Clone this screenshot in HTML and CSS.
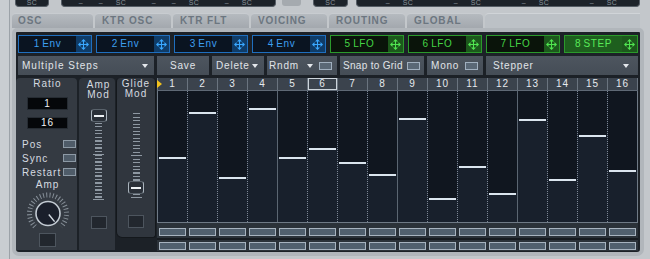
FILE: index.html
```html
<!DOCTYPE html>
<html>
<head>
<link rel="stylesheet" href="styles.css">
</head>
<body>
<svg class="defs" width="0" height="0">
  <symbol id="move" viewBox="0 0 11 11">
    <path d="M5.5 2v7M2 5.5h7" stroke="currentColor" stroke-width="1"/>
    <path d="M5.5 0L3 2.5h5zM5.5 11L3 8.5h5zM0 5.5L2.5 3v5zM11 5.5L8.5 3v5z" fill="currentColor"/>
  </symbol>
</svg>

<div class="topbar">
  <div class="sc sc-a"><span>SC</span></div>
  <div class="sc sc-b">
    <div class="grp"><span>–</span><span>–</span><span>SC</span></div>
    <div class="grp"><span>–</span><span>–</span><span>SC</span></div>
    <div class="grp"><span>–</span><span>SC</span></div>
  </div>
  <div class="greybox"></div>
  <div class="sc sc-c"><span>SC</span></div>
  <div class="sc sc-d">
    <div class="grp"><span>–</span><span>SC</span></div>
    <div class="grp"><span>–</span><span>SC</span></div>
    <div class="grp"><span>–</span><span>SC</span></div>
    <div class="grp"><span>–</span><span>SC</span></div>
  </div>
</div>

<div class="tabs">
  <div class="tab wide">OSC</div>
  <div class="tab">KTR OSC</div>
  <div class="tab">KTR FLT</div>
  <div class="tab">VOICING</div>
  <div class="tab">ROUTING</div>
  <div class="tab">GLOBAL</div>
  <div class="tab-fill"></div>
</div>

<div class="main">
  <div class="mods">
    <div class="mod blue"><span class="lbl">1 Env</span><span class="drag"><svg width="11" height="11"><use href="#move"/></svg></span></div>
    <div class="mod blue"><span class="lbl">2 Env</span><span class="drag"><svg width="11" height="11"><use href="#move"/></svg></span></div>
    <div class="mod blue"><span class="lbl">3 Env</span><span class="drag"><svg width="11" height="11"><use href="#move"/></svg></span></div>
    <div class="mod blue"><span class="lbl">4 Env</span><span class="drag"><svg width="11" height="11"><use href="#move"/></svg></span></div>
    <div class="mod green"><span class="lbl">5 LFO</span><span class="drag"><svg width="11" height="11"><use href="#move"/></svg></span></div>
    <div class="mod green"><span class="lbl">6 LFO</span><span class="drag"><svg width="11" height="11"><use href="#move"/></svg></span></div>
    <div class="mod green"><span class="lbl">7 LFO</span><span class="drag"><svg width="11" height="11"><use href="#move"/></svg></span></div>
    <div class="mod green on"><span class="lbl">8 STEP</span><span class="drag"><svg width="11" height="11"><use href="#move"/></svg></span></div>
  </div>

  <div class="tools">
    <div class="btn b-steps">Multiple Steps<i class="arrow"></i></div>
    <div class="btn b-save">Save</div>
    <div class="btn b-delete">Delete<i class="arrow"></i></div>
    <div class="btn b-rndm">Rndm<i class="arrow"></i><i class="chk"></i></div>
    <div class="btn b-snap">Snap to Grid<i class="chk"></i></div>
    <div class="btn b-mono">Mono<i class="chk"></i></div>
    <div class="btn b-stepper">Stepper<i class="arrow"></i></div>
  </div>

  <div class="lower">
    <div class="side">
      <div class="ratio">
        <div class="ptitle">Ratio</div>
        <div class="field f1">1</div>
        <div class="field f2">16</div>
        <div class="opt"><span>Pos</span><i class="chk"></i></div>
        <div class="opt"><span>Sync</span><i class="chk"></i></div>
        <div class="opt"><span>Restart</span><i class="chk"></i></div>
        <div class="ptitle amp-lbl">Amp</div>
        <svg class="knob" width="50" height="44" viewBox="0 0 50 44">
          <path d="M11.92 37.58 A18.5 18.5 0 1 1 38.08 37.58" fill="none" stroke="#858e97" stroke-width="5" stroke-dasharray="1 2.2"/>
          <circle cx="25" cy="24.5" r="12" fill="#1a1f2b" stroke="#c3cbd3" stroke-width="1.6"/>
          <path d="M25.8 25.5L31.6 32.6" stroke="#d4dce3" stroke-width="1.4"/>
        </svg>
        <div class="sq knob-sq"></div>
      </div>

      <div class="spanel amp">
        <div class="ptitle">Amp<br>Mod</div>
        <div class="slider s-amp"><div class="handle"><b></b></div></div>
        <div class="sq"></div>
      </div>

      <div class="spanel glide">
        <div class="ptitle">Glide<br>Mod</div>
        <div class="slider s-glide"><div class="handle" style="margin-top:68px"><b></b></div></div>
        <div class="sq"></div>
      </div>
    </div>

    <div class="seq">
      <div class="head">
        <div class="hc first">1</div><div class="hc">2</div><div class="hc">3</div><div class="hc">4</div>
        <div class="hc">5</div><div class="hc cur">6</div><div class="hc">7</div><div class="hc">8</div>
        <div class="hc">9</div><div class="hc">10</div><div class="hc">11</div><div class="hc">12</div>
        <div class="hc">13</div><div class="hc">14</div><div class="hc">15</div><div class="hc">16</div>
      </div>
      <div class="grid">
        <div class="col"><i style="height:66px"></i><b></b></div>
        <div class="col"><i style="height:21px"></i><b></b></div>
        <div class="col"><i style="height:86px"></i><b></b></div>
        <div class="col beat"><i style="height:17px"></i><b></b></div>
        <div class="col"><i style="height:66px"></i><b></b></div>
        <div class="col"><i style="height:57px"></i><b></b></div>
        <div class="col"><i style="height:71px"></i><b></b></div>
        <div class="col beat"><i style="height:83px"></i><b></b></div>
        <div class="col"><i style="height:27px"></i><b></b></div>
        <div class="col"><i style="height:107px"></i><b></b></div>
        <div class="col"><i style="height:75px"></i><b></b></div>
        <div class="col beat"><i style="height:102px"></i><b></b></div>
        <div class="col"><i style="height:28px"></i><b></b></div>
        <div class="col"><i style="height:88px"></i><b></b></div>
        <div class="col"><i style="height:44px"></i><b></b></div>
        <div class="col"><i style="height:79px"></i><b></b></div>
      </div>
      <div class="boxrow r1">
        <i></i><i></i><i></i><i></i><i></i><i></i><i></i><i></i>
        <i></i><i></i><i></i><i></i><i></i><i></i><i></i><i></i>
      </div>
      <div class="boxrow r2">
        <i></i><i></i><i></i><i></i><i></i><i></i><i></i><i></i>
        <i></i><i></i><i></i><i></i><i></i><i></i><i></i><i></i>
      </div>
    </div>
  </div>
</div>
</body>
</html>
```

FILE: styles.css
```css
* {
    box-sizing: border-box;
}

body {
    margin: 0;
    width: 650px;
    height: 259px;
    overflow: hidden;
    background: linear-gradient(to right, #c9cdd1 0 9px, #9ca2a8 9px 10px, #c3c7cb 10px);
    font-family: "Liberation Sans", Arial, sans-serif;
    font-size: 10px;
    letter-spacing: 1px;
    color: #dde2e7;
}

.defs {
    position: absolute;
}

/* top strip with the sidechain labels */
.topbar {
    display: flex;
    height: 7px;
}
.sc {
    display: flex;
    align-items: flex-end;
    height: 7px;
    background: #1d232a;
    border: 1px solid #555d65;
    border-top: none;
    border-radius: 0 0 4px 4px;
    font-size: 7px;
    line-height: 7px;
    letter-spacing: 0.5px;
    color: #8a939b;
    overflow: hidden;
}
.sc span {
    width: 20px;
    text-align: center;
}
.grp {
    display: flex;
}
.sc-a {
    margin-left: 15px;
    width: 34px;
    justify-content: center;
}
.sc-b {
    margin-left: 12px;
    width: 215px;
    padding-left: 9px;
    gap: 13px;
}
.greybox {
    margin-left: 6px;
    width: 19px;
    height: 6px;
    background: #a5aaaf;
    border-radius: 0 0 3px 3px;
}
.sc-c {
    margin-left: 12px;
    width: 35px;
    justify-content: center;
}
.sc-d {
    margin-left: 8px;
    width: 284px;
    padding-left: 21px;
    gap: 28px;
}

/* tabs */
.tabs {
    display: flex;
    gap: 2px;
    height: 15px;
    margin-top: 6px;
    padding-left: 12px;
}
.tab {
    width: 76px;
    padding-left: 7px;
    background: linear-gradient(#b5babf, #a3a8ae);
    border-top: 1px solid #c8ccd0;
    border-radius: 4px 4px 0 0;
    font-weight: bold;
    letter-spacing: 0.9px;
    line-height: 14px;
    color: #6c7680;
}
.tab.wide {
    width: 81px;
    padding-left: 6px;
}
.tab-fill {
    width: 155px;
    background: #bcc1c6;
    border-top: 1px solid #d0d4d8;
    border-radius: 4px 0 0 0;
}

/* main panel */
.main {
    margin-left: 12px;
    width: 632px;
    height: 228px;
    padding: 3px 2px 1px 2px;
    background: #1c2127;
    border: 4px solid #b1b6bb;
    border-radius: 5px 5px 7px 7px;
}

.mods {
    display: flex;
    gap: 4px;
    height: 18px;
}
.mod {
    display: flex;
    width: 74px;
    border: 1px solid;
}
.mod .lbl {
    flex: 1;
    text-align: center;
    line-height: 16px;
    letter-spacing: 0.6px;
    word-spacing: -1px;
}
.mod .drag {
    display: flex;
    align-items: center;
    justify-content: center;
    width: 15px;
}
.mod svg {
    display: block;
}
.blue {
    border-color: #1f6fbf;
    background: #0a1421;
    color: #3e9ff0;
}
.blue .drag {
    background: #0f3c68;
    color: #3aa8ff;
}
.green {
    border-color: #2b9a2b;
    background: #0a140a;
    color: #45d445;
}
.green .drag {
    background: #1c581c;
    color: #50e450;
}
.green.on {
    background: #1e5f1e;
    color: #58ea58;
}

/* toolbar */
.tools {
    display: flex;
    gap: 3px;
    height: 19px;
    margin-top: 3px;
}
.btn {
    display: flex;
    align-items: center;
    padding: 0 4px;
    background: linear-gradient(#4d555f, #454d56);
    color: #e0e4e8;
    white-space: nowrap;
    letter-spacing: 0.8px;
}
.arrow {
    width: 0;
    height: 0;
    margin-left: auto;
    margin-right: 2px;
    border-left: 3px solid transparent;
    border-right: 3px solid transparent;
    border-top: 4px solid #e4e8ec;
}
.chk {
    display: block;
    flex: none;
    width: 13px;
    height: 8px;
    border: 1px solid #a1b0bf;
    background: #5a6876;
}
.b-steps { width: 136px; letter-spacing: 1px; }
.b-save { width: 52px; justify-content: center; }
.b-delete { width: 52px; }
.b-rndm { width: 70px; padding-left: 2px; padding-right: 5px; }
.b-rndm .arrow { margin-left: 8px; }
.b-rndm .chk { margin-left: auto; }
.b-snap { width: 84px; padding-left: 3px; letter-spacing: 0.3px; }
.b-snap .chk,
.b-mono .chk { margin-left: auto; }
.b-mono { width: 56px; padding-right: 5px; }
.b-stepper { width: 152px; padding-left: 7px; padding-right: 7px; }

/* lower area */
.lower {
    display: flex;
    height: 173px;
    margin-top: 3px;
    margin-left: -2px;
}
.side {
    display: flex;
    align-items: flex-start;
    width: 141px;
}
.ptitle {
    line-height: 10px;
    text-align: center;
    color: #d6dbe0;
}

.ratio {
    display: flex;
    flex-direction: column;
    align-items: center;
    width: 61px;
    height: 172px;
    padding: 1px 1px 0 3px;
    background: #343a42;
    border-radius: 4px 4px 0 0;
}
.field {
    width: 41px;
    background: #05070a;
    border: 1px solid #262c33;
    text-align: center;
    color: #f0f3f6;
}
.f1 {
    height: 13px;
    margin-top: 8px;
    line-height: 11px;
}
.f2 {
    height: 12px;
    margin-top: 7px;
    line-height: 10px;
}
.f1 + .f2 + .opt {
    margin-top: 8px;
}
.opt {
    display: flex;
    align-items: center;
    justify-content: space-between;
    align-self: stretch;
    height: 14px;
    padding-left: 3px;
    color: #d6dbe0;
}
.opt .chk {
    border-color: #8d9aa6;
    background: #4f5c69;
}
.amp-lbl {
    margin-top: 1px;
}
.knob {
    display: block;
    margin-top: -1px;
}
.sq {
    width: 16px;
    height: 13px;
    background: #22272e;
    border: 1px solid #4d555e;
}
.knob-sq {
    width: 17px;
    height: 14px;
}

.spanel {
    display: flex;
    flex-direction: column;
    align-items: center;
    padding-top: 2px;
    background: #30363e;
}
.amp {
    width: 36px;
    height: 172px;
    margin-left: 2px;
    padding-left: 3px;
    border-radius: 4px 4px 0 0;
}
.glide {
    width: 40px;
    height: 160px;
    margin-left: 1px;
    padding-top: 1px;
    border: 1px solid #14181c;
    border-top: none;
    border-radius: 4px 4px 3px 6px;
}

.slider {
    display: flex;
    flex-direction: column;
    align-items: center;
    width: 16px;
    background:
        linear-gradient(#8e98a2, #8e98a2) 50% 50% / 11px 1px no-repeat,
        linear-gradient(#8e98a2, #8e98a2) 50% 100% / 11px 1px no-repeat,
        repeating-linear-gradient(#8e98a2 0 1px, transparent 1px 3.5px) 50% 0 / 7px 100% no-repeat;
}
.s-amp {
    height: 91px;
    margin-top: 9px;
    margin-bottom: 16px;
}
.s-glide {
    height: 85px;
    margin-top: 14px;
    margin-bottom: 17px;
}
.handle {
    display: flex;
    align-items: center;
    justify-content: center;
    width: 16px;
    height: 13px;
    background: #2a3038;
    border: 1px solid;
    border-color: #59626b #aab4bd;
    border-radius: 3px;
}
.handle b {
    width: 10px;
    height: 2px;
    background: #eef2f5;
}

/* step sequencer */
.seq {
    width: 481px;
}
.head {
    display: flex;
    height: 13px;
    background: #3b434d;
    border-left: 1px solid #6d7782;
    border-bottom: 1px solid #5f6975;
}
.hc {
    position: relative;
    width: 30px;
    border-right: 1px solid #6a747f;
    text-align: center;
    line-height: 12px;
    color: #e6eaee;
}
.hc.cur {
    box-shadow: inset 0 0 0 1px #ccd4db;
}
.hc.first::before {
    content: "";
    position: absolute;
    left: -1px;
    top: 2px;
    border-top: 4px solid transparent;
    border-bottom: 4px solid transparent;
    border-left: 5px solid #f2c21c;
}

.grid {
    display: flex;
    height: 132px;
    border-left: 1px solid #6f7a86;
    border-bottom: 1px solid #6f7a86;
}
.col {
    display: flex;
    flex-direction: column;
    width: 30px;
    background: #18202c;
    border-right: 1px dotted #7d8896;
}
.col.beat {
    border-right: 1px solid #5b6672;
}
.col:last-child {
    border-right: 1px solid #6f7a86;
}
.col i {
    display: block;
    background: #10161f;
}
.col b {
    display: block;
    height: 2px;
    margin: 0 1px;
    background: #dbe5ee;
}

.boxrow {
    display: flex;
    padding-left: 1px;
    background: #2b3239;
}
.boxrow i {
    display: block;
    width: 27px;
    height: 8px;
    margin: 0 2px 0 1px;
    background: #51606e;
    border: 1px solid #a7b3bf;
}
.r1 {
    height: 17px;
    padding-top: 5px;
    border-bottom: 2px solid #171b20;
}
.r2 {
    height: 11px;
    padding-top: 2px;
}
```
